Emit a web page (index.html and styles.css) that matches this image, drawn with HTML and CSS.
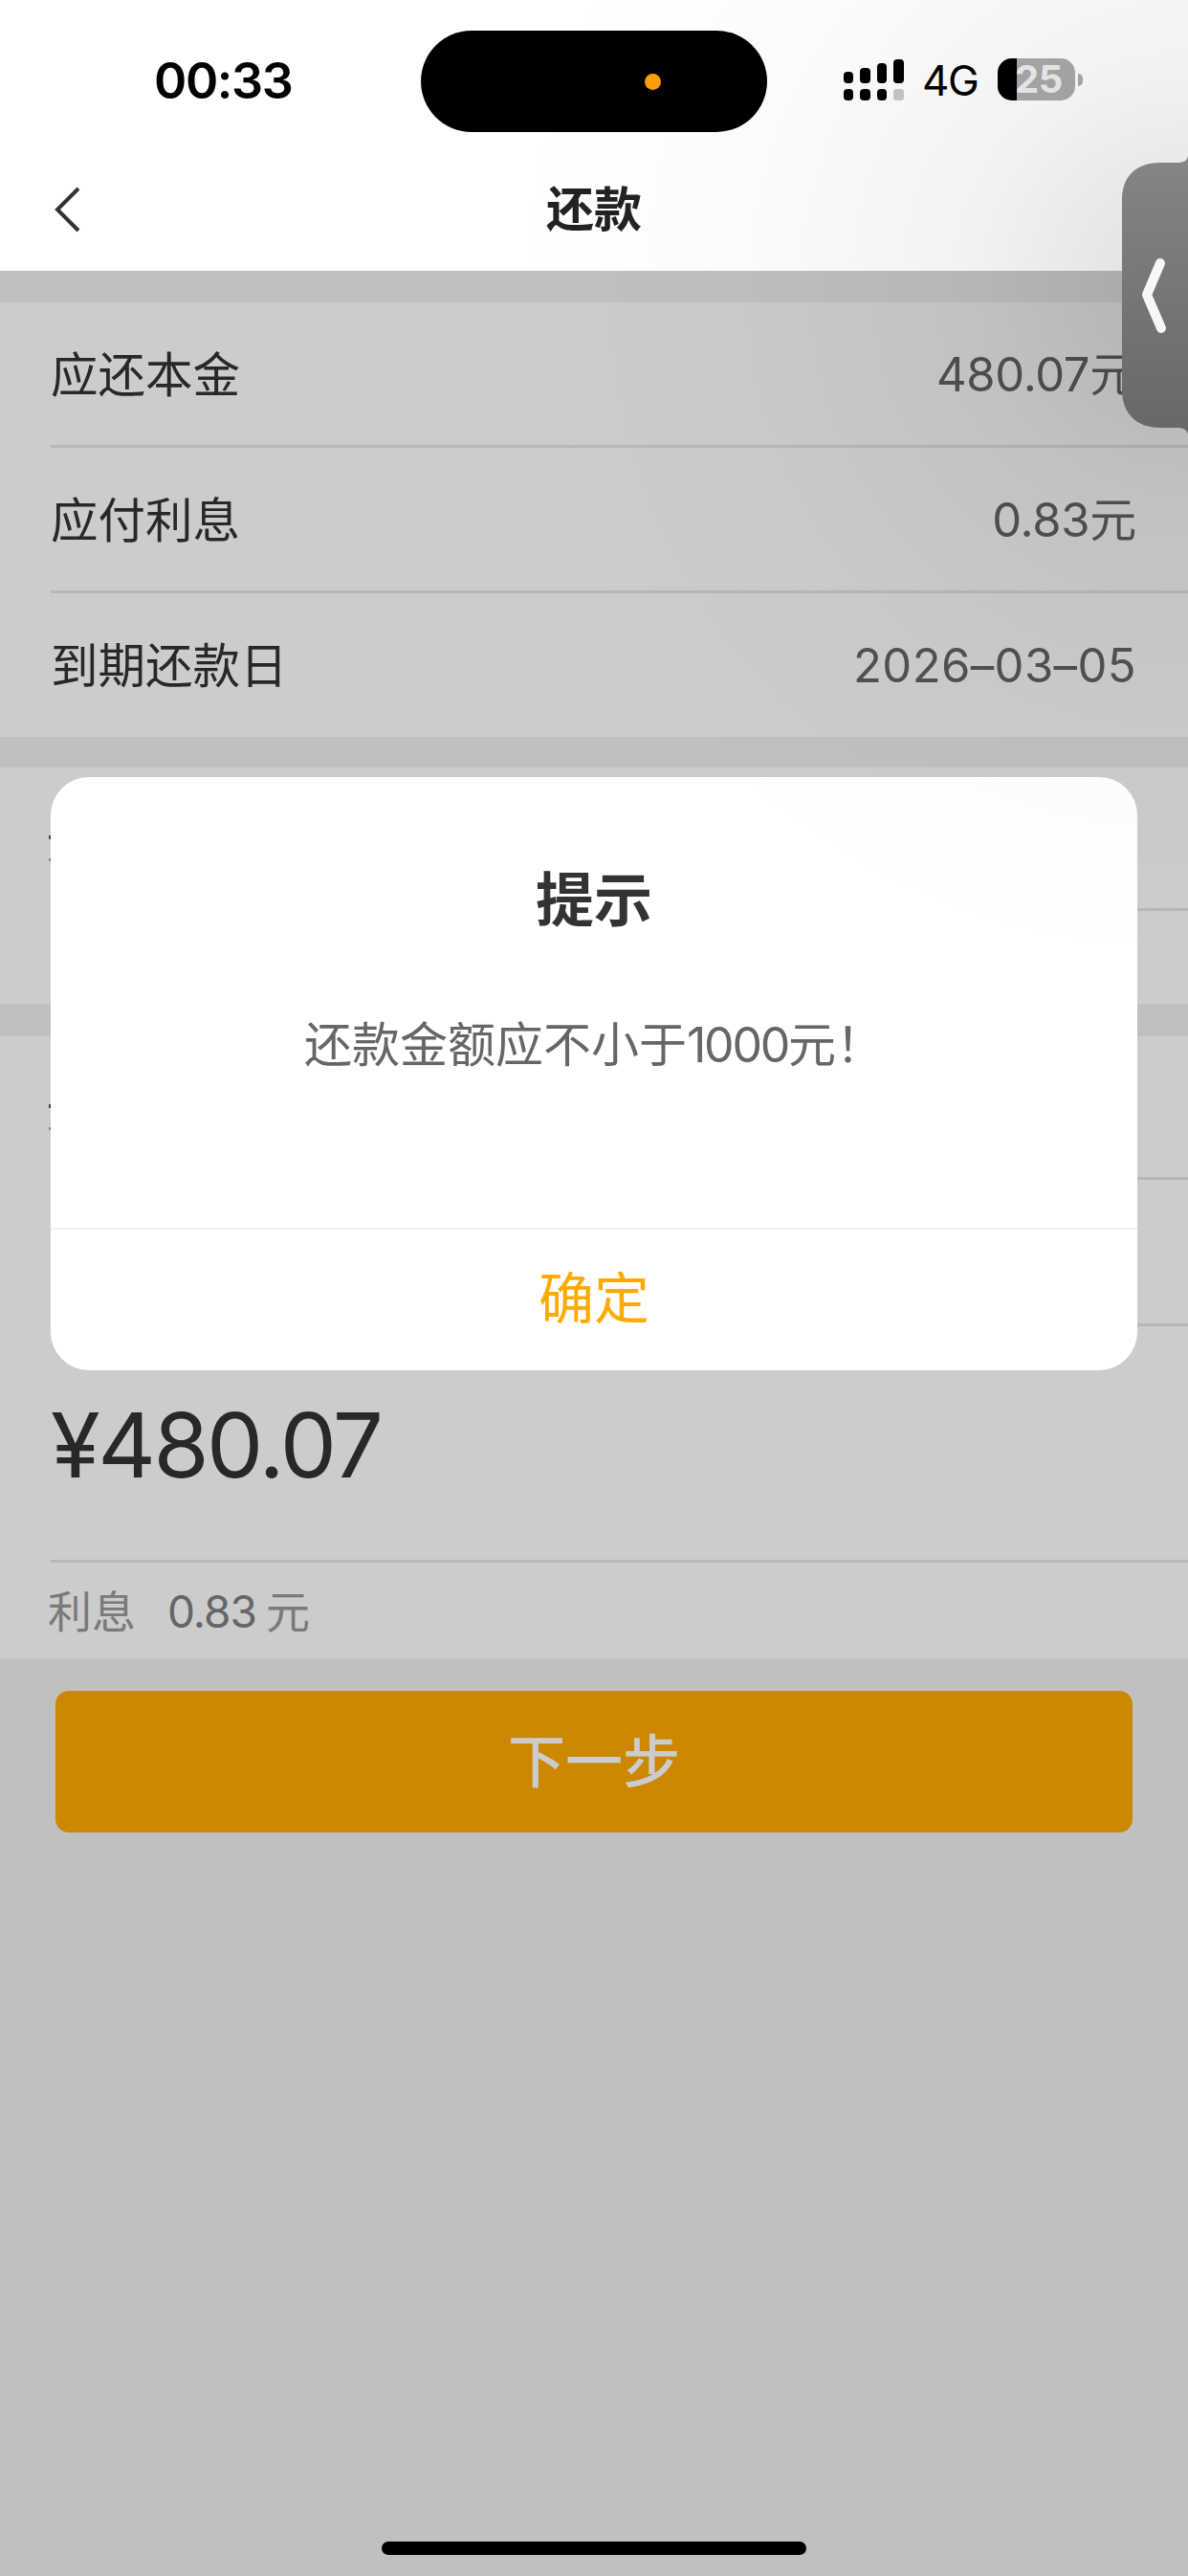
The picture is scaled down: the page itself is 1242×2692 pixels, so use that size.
FILE: index.html
```
<!DOCTYPE html>
<html lang="zh-CN">
<head>
<meta charset="utf-8">
<title>还款</title>
<link rel="stylesheet" href="styles.css">
</head>
<body>
<div class="page">
  <header class="header">
    <div class="status">
      <div class="time">00:33</div>
      <div class="island"><span class="island-dot"></span></div>
      <div class="status-right">
        <svg class="signal" width="63" height="43" viewBox="0 0 63 43">
          <g fill="#000">
            <rect x="0" y="13" width="10" height="12" rx="4"/>
            <rect x="17" y="9" width="11" height="16" rx="4"/>
            <rect x="35" y="4" width="10" height="21" rx="4"/>
            <rect x="52" y="0" width="11" height="25" rx="4"/>
            <rect x="0" y="31" width="10" height="12" rx="4"/>
            <rect x="17" y="31" width="11" height="12" rx="4"/>
            <rect x="35" y="31" width="10" height="12" rx="4"/>
          </g>
          <rect x="52" y="31" width="11" height="12" rx="3" fill="#c8c8c8"/>
        </svg>
        <span class="net">4G</span>
        <div class="battery"><span class="battery-fill"></span><span class="battery-num">25</span></div>
        <span class="battery-nub"></span>
      </div>
    </div>
    <div class="nav">
      <svg class="back" width="28" height="48" viewBox="0 0 28 48"><path d="M25 2 3 24l22 22" fill="none" stroke="#333" stroke-width="4"/></svg>
      <h1 class="nav-title">还款</h1>
    </div>
  </header>

  <section class="card">
    <div class="row"><span class="label">应还本金</span><span class="value">480.07元</span></div>
    <div class="row"><span class="label">应付利息</span><span class="value">0.83元</span></div>
    <div class="row row-last"><span class="label">到期还款日</span><span class="value value-date">2026–03–05</span></div>
  </section>

  <section class="card card-second">
    <div class="row row-blank"><span class="speck"></span><span class="speck speck-light"></span></div>
    <div class="row-rest"></div>
  </section>

  <section class="card">
    <div class="row row-blank"><span class="speck"></span><span class="speck speck-light"></span></div>
    <div class="row row-blank row-tall"></div>
    <div class="amount">¥480.07</div>
    <div class="interest"><span class="interest-label">利息</span><span class="interest-num">0.83</span><span class="interest-unit">元</span></div>
  </section>

  <div class="actions"><button class="next">下一步</button></div>

  <div class="mask"></div>
  <div class="tint"></div>

  <div class="modal">
    <h2 class="modal-title">提示</h2>
    <p class="modal-text">还款金额应不小于<span class="modal-num">1000</span>元！</p>
    <div class="modal-btn">确定</div>
  </div>

  <div class="float-tab">
    <svg width="69" height="291" viewBox="0 0 69 291">
      <defs><linearGradient id="tab" x1="0" y1="0" x2="0" y2="1"><stop offset="0" stop-color="#858585"/><stop offset="1" stop-color="#676767"/></linearGradient></defs>
      <path d="M69 0C68 5 64 7 58 7H40C14 7 0 22 0 46V244C0 268 14 284 40 284H58C64 284 68 286 69 291Z" fill="url(#tab)"/>
      <path d="M40 112 26 145l15 35" fill="none" stroke="#f6f6fb" stroke-width="10" stroke-linecap="round" stroke-linejoin="round"/>
    </svg>
  </div>

  <div class="home-bar"></div>
</div>
</body>
</html>
```
FILE: styles.css
```
* { box-sizing: border-box; }
html, body { margin: 0; padding: 0; }
body { font-family: Inter, "Noto Sans CJK SC", sans-serif; background: #f0f0f0; }

.page { position: relative; width: 1242px; height: 2692px; overflow: hidden; background: #f0f0f0; }

.header { height: 283px; background: #fff; }
.status { position: relative; height: 150px; }
.time { position: absolute; left: 161px; top: 55px; font-size: 52px; line-height: 60px; font-weight: 600; color: #000; letter-spacing: -1.4px; }
.island { position: absolute; left: 440px; top: 32px; width: 362px; height: 106px; border-radius: 53px; background: #000; }
.island-dot { position: absolute; left: 234px; top: 45px; width: 17px; height: 17px; border-radius: 50%; background: #ff9f0a; }
.status-right { position: absolute; left: 882px; top: 62px; display: flex; align-items: flex-start; }
.signal { display: block; }
.net { margin-left: 19px; width: 79px; font-size: 44px; line-height: 44px; color: #000; letter-spacing: -1.5px; }
.battery { position: relative; width: 81px; height: 44px; margin-top: -1px; border-radius: 15px; background: #aaa; }
.battery-fill { position: absolute; left: 0; top: 0; width: 20px; height: 44px; border-radius: 15px 0 0 15px; background: #000; }
.battery-num { position: absolute; left: 18px; top: 0; font-size: 40px; line-height: 44px; font-weight: 700; color: #eee; letter-spacing: -.5px; }
.battery-nub { width: 5px; height: 13px; margin: 15px 0 0 3px; border-radius: 0 6px 6px 0; background: #aaa; }

.nav { position: relative; height: 133px; display: flex; align-items: center; justify-content: center; }
.back { position: absolute; left: 57px; top: 45px; }
.nav-title { margin: 0; font-size: 50px; line-height: 70px; font-weight: 600; color: #222; position: relative; top: 2px; }

.card { margin-top: 33px; padding-left: 53px; background: #fff; }
.card-second { height: 247px; margin-top: 32px; }
.card-second + .card { margin-top: 34px; }
.row { position: relative; height: 152px; display: flex; align-items: center; justify-content: space-between; padding-right: 54px; border-bottom: 3px solid #e5e5e5; }
.row-last { height: 150px; border-bottom: 0; }
.row-blank { height: 150px; }
.row-tall { height: 153px; }
.label { font-size: 49.5px; line-height: 70px; color: #333; position: relative; top: 1px; }
.value { font-size: 49px; line-height: 70px; color: #666; letter-spacing: -.3px; position: relative; top: 1px; }
.value-date { letter-spacing: .4px; }

.speck { position: absolute; left: -2px; top: 71px; width: 2px; height: 4px; background: #555; }
.speck-light { top: 95px; height: 3px; background: #aaa; }

.amount { height: 247px; padding-top: 67px; font-size: 94px; line-height: 114px; color: #333; letter-spacing: -2.5px; border-bottom: 3px solid #e5e5e5; }
.interest { height: 100px; display: flex; align-items: center; margin-left: -3px; font-size: 46px; line-height: 60px; color: #999; position: relative; }
.interest-label, .interest-num, .interest-unit { position: relative; top: 1px; }
.interest-num { margin-left: 33px; color: #808080; letter-spacing: -1px; }
.interest-unit { margin-left: 10px; }

.actions { padding: 34px 58px 0; }
.next { display: block; width: 100%; height: 148px; padding: 0 0 10px; border: 0; border-radius: 14px; background: #ffaa00; color: #fff; font-family: inherit; font-size: 60px; font-weight: 500; }

.mask { position: absolute; left: 0; right: 0; top: 283px; bottom: 0; background: rgba(0, 0, 0, .2); }

.modal { position: absolute; left: 53px; top: 812px; width: 1136px; height: 620px; border-radius: 40px; background: #fff; display: flex; flex-direction: column; align-items: center; z-index: 1; }
.modal-title { margin: 0; padding-top: 86px; font-size: 61px; line-height: 86px; font-weight: 600; color: #333; }
.modal-text { margin: 0; padding-top: 73px; font-size: 50px; line-height: 70px; color: #666; }
.modal-num { letter-spacing: -2.2px; }
.modal-btn { margin-top: auto; width: 100%; height: 149px; padding-bottom: 12px; display: flex; align-items: center; justify-content: center; border-top: 2px solid #f0f0f0; font-size: 58px; color: #ffaa00; }

.tint { position: absolute; left: 0; top: 0; width: 1242px; height: 1000px; background: radial-gradient(circle 720px at 1242px 300px, rgba(0,0,0,.13) 0, rgba(0,0,0,.05) 32%, rgba(0,0,0,.015) 65%, rgba(0,0,0,0) 100%); z-index: 2; }

.float-tab { position: absolute; left: 1173px; top: 163px; width: 69px; height: 291px; z-index: 3; }
.float-tab svg { display: block; }

.home-bar { position: absolute; left: 399px; top: 2656px; width: 444px; height: 14px; border-radius: 7px; background: #000; }
```
